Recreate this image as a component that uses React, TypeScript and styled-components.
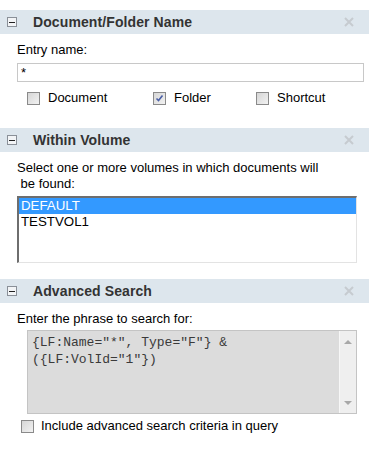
import React from "react";
import styled, { createGlobalStyle } from "styled-components";

const Global = createGlobalStyle`
  html, body { margin: 0; padding: 0; background: #fff; }
  body { font-family: "Liberation Sans", Arial, sans-serif; font-size: 13px; color: #000; }
`;

const Page = styled.div`
  width: 369px;
  padding-top: 10px;
  display: flex;
  flex-direction: column;
`;

const Section = styled.section<{ $gap: number }>`
  display: flex;
  flex-direction: column;
  padding-bottom: ${(p) => p.$gap}px;
`;

const Header = styled.div`
  height: 24px;
  background: #dde6ed;
  display: flex;
  align-items: center;
  padding: 0 15px 0 7px;
`;

const Toggle = styled.span`
  width: 8px;
  height: 8px;
  border: 1px solid #8a9098;
  background: #f2f4f6;
  display: flex;
  align-items: center;
  justify-content: center;
  margin-right: 16px;
  &::after {
    content: "";
    width: 6px;
    height: 1px;
    background: #222;
  }
`;

const Title = styled.h2`
  margin: 0;
  flex: 1;
  font-size: 14px;
  font-weight: bold;
  color: #333;
  letter-spacing: 0.1px;
`;

const Close = styled.svg`
  width: 10px;
  height: 10px;
`;

const Body = styled.div<{ $pad: string }>`
  padding: ${(p) => p.$pad};
  display: flex;
  flex-direction: column;
`;

const Label = styled.div<{ $mb: number }>`
  line-height: 16px;
  margin-bottom: ${(p) => p.$mb}px;
  white-space: pre;
`;

const TextInput = styled.div`
  height: 17px;
  border: 1px solid #c8c8c8;
  padding: 0 3px;
  font-size: 13px;
  line-height: 17px;
`;

const CheckRow = styled.div`
  display: flex;
  margin-top: 8px;
  padding-left: 10px;
`;

const CheckItem = styled.label<{ $w?: number; $gap?: number }>`
  display: flex;
  align-items: center;
  width: ${(p) => (p.$w ? `${p.$w}px` : "auto")};
  line-height: 16px;
  & > span:first-child {
    margin-right: ${(p) => p.$gap ?? 8}px;
  }
`;

const Box = styled.span`
  width: 11px;
  height: 11px;
  border: 1px solid #8a8a8a;
  background: linear-gradient(135deg, #d6d6d6 0%, #f2f2f2 100%);
  display: flex;
  align-items: center;
  justify-content: center;
  flex: none;
`;

const ListBox = styled.div`
  height: 64px;
  border-style: solid;
  border-width: 2px 1px 1px 2px;
  border-color: #6e6e6e #e3e3e3 #e3e3e3 #6e6e6e;
  display: flex;
  flex-direction: column;
`;

const Option = styled.div<{ $sel?: boolean }>`
  height: 16px;
  line-height: 16px;
  padding-left: 2px;
  font-size: 13.3px;
  background: ${(p) => (p.$sel ? "#3399ff" : "transparent")};
  color: ${(p) => (p.$sel ? "#fff" : "#000")};
`;

const AreaWrap = styled.div`
  margin-left: 10px;
  height: 82px;
  border: 1px solid #c4c4c4;
  display: flex;
  background: #dcdcdc;
`;

const AreaText = styled.pre`
  margin: 0;
  flex: 1;
  padding: 3px 4px;
  font-family: "Liberation Mono", "Courier New", monospace;
  font-size: 13px;
  line-height: 17px;
  color: #3a3a3a;
  white-space: pre-wrap;
`;

const Scroll = styled.div`
  width: 16px;
  background: #efefef;
  border-left: 1px solid #f7f7f7;
  display: flex;
  flex-direction: column;
  justify-content: space-between;
  align-items: center;
  padding: 9px 0 8px;
`;

const Arrow = styled.span<{ $up?: boolean }>`
  width: 0;
  height: 0;
  border-left: 4px solid transparent;
  border-right: 4px solid transparent;
  ${(p) => (p.$up ? "border-bottom: 4px solid #a8a8a8;" : "border-top: 4px solid #a8a8a8;")}
`;

const BottomCheck = styled.div`
  margin-top: 4px;
  padding-left: 4px;
  display: flex;
`;

const CloseIcon = () => (
  <Close viewBox="0 0 10 10">
    <path d="M1 1L9 9M9 1L1 9" stroke="#c6cbd0" strokeWidth="2" />
  </Close>
);

const Check = ({ checked }: { checked?: boolean }) => (
  <Box>
    {checked && (
      <svg width="9" height="9" viewBox="0 0 9 9">
        <path d="M1.5 4.5L3.5 6.5L7.5 1.5" stroke="#4a5fa6" strokeWidth="1.6" fill="none" />
      </svg>
    )}
  </Box>
);

const Head = ({ title }: { title: string }) => (
  <Header>
    <Toggle />
    <Title>{title}</Title>
    <CloseIcon />
  </Header>
);

export default function App() {
  return (
    <Page>
      <Global />
      <Section $gap={22}>
        <Head title="Document/Folder Name" />
        <Body $pad="8px 5px 0 17px">
          <Label $mb={5}>Entry name:</Label>
          <TextInput>*</TextInput>
          <CheckRow>
            <CheckItem $w={126}>
              <Check />
              Document
            </CheckItem>
            <CheckItem $w={103}>
              <Check checked />
              Folder
            </CheckItem>
            <CheckItem>
              <Check />
              Shortcut
            </CheckItem>
          </CheckRow>
        </Body>
      </Section>
      <Section $gap={16}>
        <Head title="Within Volume" />
        <Body $pad="8px 12px 0 17px">
          <Label $mb={4}>{"Select one or more volumes in which documents will\n be found:"}</Label>
          <ListBox>
            <Option $sel>DEFAULT</Option>
            <Option>TESTVOL1</Option>
          </ListBox>
        </Body>
      </Section>
      <Section $gap={0}>
        <Head title="Advanced Search" />
        <Body $pad="8px 12px 0 17px">
          <Label $mb={3}>Enter the phrase to search for:</Label>
          <AreaWrap>
            <AreaText>{'{LF:Name="*", Type="F"} &\n({LF:VolId="1"})'}</AreaText>
            <Scroll>
              <Arrow $up />
              <Arrow />
            </Scroll>
          </AreaWrap>
          <BottomCheck>
            <CheckItem $gap={7}>
              <Check />
              Include advanced search criteria in query
            </CheckItem>
          </BottomCheck>
        </Body>
      </Section>
    </Page>
  );
}
